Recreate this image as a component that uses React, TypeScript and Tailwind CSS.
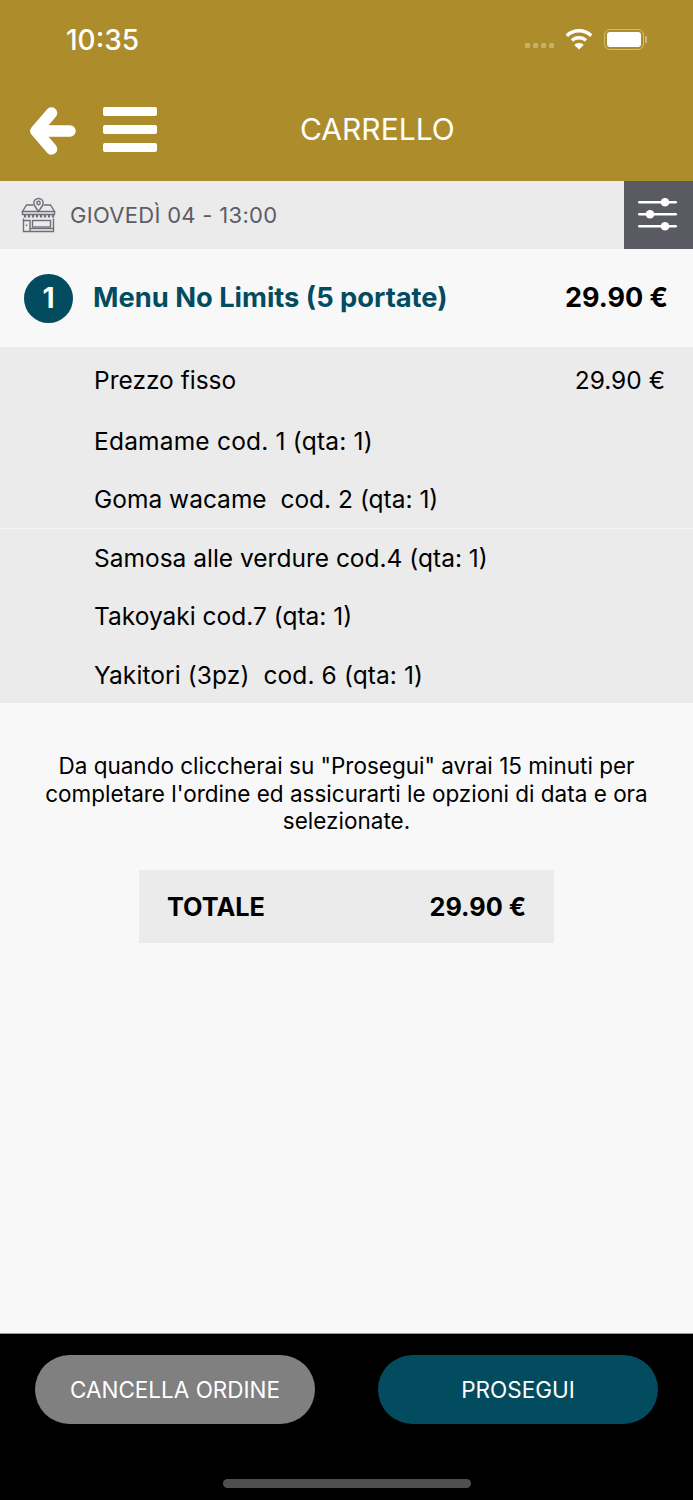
import React from 'react';

const font = { fontFamily: 'Inter, "Liberation Sans", sans-serif' };

const StoreIcon = () => (
  <svg width="36" height="36" viewBox="0 0 36 36" fill="none" stroke="#6f6f78" strokeWidth="1.400">
    <path d="M17.500 1.500c-2.800 0-4.700 2-4.700 4.500 0 3 3 5.400 4.700 8.500 1.700-3.100 4.700-5.500 4.700-8.500 0-2.500-1.900-4.500-4.700-4.500z" />
    <circle cx="17.500" cy="6" r="1.700" />
    <path d="M12.500 8H5.500L1.500 14.500h32l-4-6.500h-7" />
    <path d="M1.500 14.500v3h32v-3" />
    <path d="M2.500 21.500v13h30v-13" />
    <path d="M9 34v-10.500H2.500" />
    <rect x="11.500" y="23.500" width="18" height="6.500" />
    <path d="M9 31.500h23.500" />
    <path d="M5.500 27.500v1.500" />
    <path d="M4 17.500v3M8 17.500v3M12 17.500v3M16 17.500v3M20 17.500v3M24 17.500v3M28 17.500v3M32 17.500v3" strokeWidth="2.200" />
  </svg>
);

const SlidersIcon = () => (
  <svg width="40" height="34" viewBox="0 0 40 34" fill="white">
    <rect x="0" y="3" width="39" height="2.400" rx="1.200" />
    <rect x="0" y="15" width="39" height="2.400" rx="1.200" />
    <rect x="0" y="27" width="39" height="2.400" rx="1.200" />
    <circle cx="27" cy="4.200" r="4.300" />
    <circle cx="12" cy="16.200" r="4.300" />
    <circle cx="27" cy="28.200" r="4.300" />
  </svg>
);

const items = [
  { label: 'Edamame cod. 1 (qta: 1)', cls: 'tracking-[0.2px]' },
  { label: 'Goma wacame\u00a0 cod. 2 (qta: 1)', cls: 'border-b border-[#f5f5f5]' },
  { label: 'Samosa alle verdure cod.4 (qta: 1)', cls: '' },
  { label: 'Takoyaki cod.7 (qta: 1)', cls: '' },
  { label: 'Yakitori (3pz)\u00a0 cod. 6 (qta: 1)', cls: 'tracking-[0.1px]' },
];

export default function App() {
  return (
    <div className="flex h-[1500px] w-[693px] flex-col overflow-hidden bg-[#f8f8f8]" style={font}>
      {/* Header */}
      <div className="h-[181px] shrink-0 bg-[#ad8d2b] text-white">
        <div className="flex h-[80px] items-center justify-between pl-[66px] pr-[46px]">
          <span className="text-[28px] font-medium leading-none">10:35</span>
          <div className="flex items-center pb-[2px]">
            <div className="mr-[11px] mt-[13px] flex gap-[3px]">
              {[0, 1, 2, 3].map(i => (
                <span key={i} className="h-[5px] w-[5px] rounded-[1px] bg-white/30" />
              ))}
            </div>
            <svg width="28" height="21" viewBox="0 0 28 21" fill="white">
              <path d="M14 0C8.800 0 4 2 .6 5.400l2.400 2.600C5.800 5.200 9.700 3.500 14 3.500s8.200 1.700 11 4.500l2.400-2.600C24 2 19.200 0 14 0z" />
              <path d="M14 7c-3.200 0-6.100 1.200-8.200 3.300l2.400 2.500C9.700 11.400 11.700 10.500 14 10.500s4.300.9 5.800 2.300l2.400-2.500C20.100 8.200 17.200 7 14 7z" />
              <path d="M14 14c-1.900 0-3.500.7-4.700 1.900L14 20.500l4.700-4.600C17.500 14.700 15.900 14 14 14z" />
            </svg>
            <div className="ml-[11px] flex items-center">
              <div className="h-[21px] w-[40px] rounded-[6px] border-[1.500px] border-white/40 p-[2px]">
                <div className="h-full w-full rounded-[3px] bg-white" />
              </div>
              <div className="ml-[1px] h-[7px] w-[2px] rounded-r-[1px] bg-white/40" />
            </div>
          </div>
        </div>
        <div className="flex h-[101px] items-start pl-[30px] pt-[27px]">
          <svg width="46" height="48" viewBox="0 0 46 48">
            <path
              d="M21.500 6L6 24l15.500 18M8 24h32"
              fill="none"
              stroke="white"
              strokeWidth="11.500"
              strokeLinecap="round"
              strokeLinejoin="round"
            />
          </svg>
          <div className="ml-[27px] flex w-[54px] flex-col gap-[9px]">
            <span className="h-[9px] rounded-[2px] bg-white" />
            <span className="h-[9px] rounded-[2px] bg-white" />
            <span className="h-[9px] rounded-[2px] bg-white" />
          </div>
          <span className="ml-[143px] mt-[4px] text-[30px] leading-[36px]">CARRELLO</span>
        </div>
      </div>

      {/* Date bar */}
      <div className="flex h-[68px] shrink-0 items-center bg-[#ebebeb]">
        <div className="ml-[21px]">
          <StoreIcon />
        </div>
        <span className="ml-[13px] flex-1 text-[22px] tracking-[0.3px] text-[#5d5d66]">GIOVEDÌ 04 - 13:00</span>
        <div className="flex h-full w-[69px] items-center justify-center bg-[#5a5a63] pr-[2px]">
          <SlidersIcon />
        </div>
      </div>

      {/* Menu row */}
      <div className="flex h-[98px] shrink-0 items-center pl-[24px] pr-[25px]">
        <div className="flex h-[49px] w-[49px] items-center justify-center rounded-full bg-[#034c60] text-[28px] font-bold text-white">
          1
        </div>
        <span className="ml-[20px] flex-1 text-[27.300px] font-bold text-[#034c60]">Menu No Limits (5 portate)</span>
        <span className="text-[27px] font-bold text-black">29.90 €</span>
      </div>

      {/* Details */}
      <div className="h-[356px] shrink-0 bg-[#ebebeb] pt-[1px] text-[24.500px] text-black">
        <div className="flex h-[64px] items-center justify-between pl-[94px] pr-[28px]">
          <span>Prezzo fisso</span>
          <span>29.90 €</span>
        </div>
        {items.map(item => (
          <div key={item.label} className={`flex h-[58.500px] items-center pl-[94px] ${item.cls}`}>
            {item.label}
          </div>
        ))}
      </div>

      {/* Note + total */}
      <div className="flex-1">
        <p className="mx-auto mt-[49px] w-[620px] text-center text-[22.500px] leading-[27.500px] text-black">
          Da quando cliccherai su "Prosegui" avrai 15 minuti per completare l'ordine ed assicurarti le opzioni di data e ora selezionate.
        </p>
        <div className="mx-auto mt-[35px] flex h-[73px] w-[415px] items-center justify-between bg-[#ebebeb] px-[28px] pt-[2px] text-[25.300px] font-bold text-black">
          <span>TOTALE</span>
          <span>29.90 €</span>
        </div>
      </div>

      {/* Footer */}
      <div className="relative h-[167px] shrink-0 border-t border-[#999] bg-black">
        <div className="flex justify-between px-[35px] pt-[21px]">
          <button className="h-[69px] w-[280px] rounded-full bg-[#808080] text-[22.500px] text-white">CANCELLA ORDINE</button>
          <button className="h-[69px] w-[280px] rounded-full bg-[#034c60] text-[22.500px] text-white">PROSEGUI</button>
        </div>
        <div className="absolute bottom-[12px] left-[223px] h-[9px] w-[248px] rounded-full bg-[#4f4f4f]" />
      </div>
    </div>
  );
}
